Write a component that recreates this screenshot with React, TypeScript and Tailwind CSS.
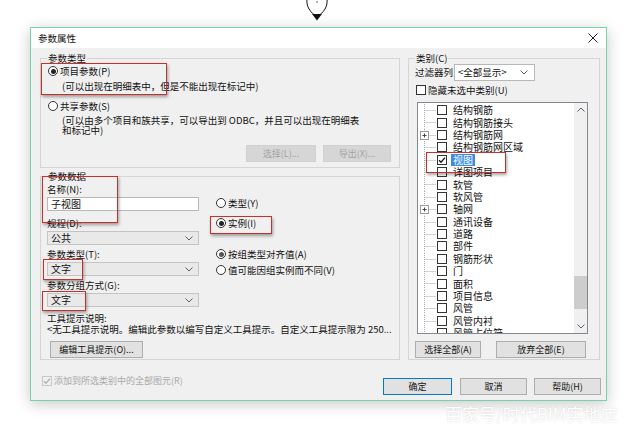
import clsx from "clsx";

const cjk = "font-['Noto_Sans_CJK_SC','Noto_Sans',sans-serif]";

function Radio({ checked, label, dim }: { checked?: boolean; label: string; dim?: boolean }) {
  return (
    <div className="flex items-center gap-[2px] h-[12px] leading-[12px] whitespace-nowrap">
      <span className="w-[10px] h-[10px] rounded-full border border-[#333333] bg-white flex items-center justify-center">
        {checked && <span className={clsx("w-[5px] h-[5px] rounded-full", dim ? "bg-[#555555]" : "bg-[#222222]")} />}
      </span>
      <span>{label}</span>
    </div>
  );
}

function Check({ checked, disabled }: { checked?: boolean; disabled?: boolean }) {
  return (
    <span
      className={clsx(
        "w-[10px] h-[10px] border flex items-center justify-center shrink-0",
        disabled ? "border-[#c8c8c8] bg-[#f0f0f0]" : "border-[#333333] bg-white"
      )}
    >
      {checked && (
        <svg width="8" height="8" viewBox="0 0 8 8">
          <path d="M1 4.2 L3 6.2 L7 1.6" fill="none" stroke={disabled ? "#b0b0b0" : "#111"} strokeWidth="1.3" />
        </svg>
      )}
    </span>
  );
}

function RedBox({ className }: { className: string }) {
  return (
    <div
      className={clsx(
        "absolute border-[1.5px] border-[#c8302c] shadow-[1px_2px_3px_rgba(0,0,0,0.35)] pointer-events-none z-10",
        className
      )}
    />
  );
}

function Chevron({ up }: { up?: boolean }) {
  return (
    <svg width="8" height="5" viewBox="0 0 8 5">
      <path d={up ? "M0.5 4.5 L4 1 L7.5 4.5" : "M0.5 0.5 L4 4 L7.5 0.5"} fill="none" stroke="#606060" strokeWidth="1" />
    </svg>
  );
}

function Select({ value, className }: { value: string; className?: string }) {
  return (
    <div
      className={clsx(
        "h-[14px] flex items-center justify-between pl-[3px] pr-[5px] border border-[#c4c4c4] bg-[#e9e9e9] text-[10px] leading-[12px]",
        className
      )}
    >
      <span>{value}</span>
      <Chevron />
    </div>
  );
}

function Btn({
  children,
  className,
  disabled,
  primary,
}: {
  children: React.ReactNode;
  className?: string;
  disabled?: boolean;
  primary?: boolean;
}) {
  return (
    <div
      className={clsx(
        "h-[17px] flex items-center justify-center border text-[9px] whitespace-nowrap",
        disabled
          ? "bg-[#d6d6d6] border-[#d0d0d0] text-[#a3a3a3]"
          : primary
          ? "bg-[#e1e1e1] border-[#0078d7] border-[1.5px]"
          : "bg-[#e1e1e1] border-[#adadad]",
        className
      )}
    >
      {children}
    </div>
  );
}

const cats: { name: string; plus?: boolean; sel?: boolean }[] = [
  { name: "结构钢筋" },
  { name: "结构钢筋接头" },
  { name: "结构钢筋网", plus: true },
  { name: "结构钢筋网区域" },
  { name: "视图", sel: true },
  { name: "详图项目" },
  { name: "软管" },
  { name: "软风管" },
  { name: "轴网", plus: true },
  { name: "通讯设备" },
  { name: "道路" },
  { name: "部件" },
  { name: "钢筋形状" },
  { name: "门" },
  { name: "面积" },
  { name: "项目信息" },
  { name: "风管" },
  { name: "风管内衬" },
  { name: "风管占位符" },
];

function TreeLines({ plus }: { plus?: boolean }) {
  return (
    <svg width="19" height="12.4" viewBox="0 0 19 12.4" className="shrink-0">
      <line x1="6.5" y1="0" x2="6.5" y2="12.4" stroke="#a8a8a8" strokeDasharray="1 1" />
      <line x1="6.5" y1="6.5" x2="18" y2="6.5" stroke="#a8a8a8" strokeDasharray="1 1" />
      {plus && (
        <g>
          <rect x="2.5" y="2.5" width="8" height="8" fill="white" stroke="#9a9a9a" />
          <line x1="4.5" y1="6.5" x2="8.5" y2="6.5" stroke="#444" />
          <line x1="6.5" y1="4.5" x2="6.5" y2="8.5" stroke="#444" />
        </g>
      )}
    </svg>
  );
}

export default function App() {
  return (
    <div className={clsx("relative w-[640px] h-[432px] bg-white overflow-hidden text-[#111]", cjk)}>
      {/* cursor */}
      <div className="h-[29px] pl-[303px]">
        <svg width="28" height="26" viewBox="0 0 28 26" className="-mt-[2px]">
          <path d="M4 0 C3 9 7 14 14 19 C21 14 25 9 24 0" fill="white" stroke="#111" strokeWidth="1" />
          <circle cx="14" cy="4" r="0.7" fill="#333" />
          <path d="M9 16 L19 16 L14 22.5 Z" fill="#111" />
        </svg>
      </div>

      <div className="ml-[30px] w-[577px] h-[374px] border border-[#78d2a8] bg-[#f0f0f0] shadow-[0_3px_14px_rgba(0,0,0,0.22)] flex flex-col">
        {/* title bar */}
        <div className="h-[20px] bg-white flex items-center justify-between pl-[7px] pr-[8px] shrink-0">
          <span className="text-[9.5px]">参数属性</span>
          <svg width="10" height="10" viewBox="0 0 10 10">
            <path d="M0.5 0.5 L9.5 9.5 M9.5 0.5 L0.5 9.5" stroke="#222" strokeWidth="1" />
          </svg>
        </div>

        {/* body */}
        <div className="flex pt-[4px] pl-[9px] text-[9.5px]">
          {/* left column */}
          <div className="w-[360px] flex flex-col">
            <fieldset className="relative border border-[#d5d5d5] pl-[6px] pr-[2px] pb-[5px] min-w-0">
              <legend className="leading-[12px] px-[1px]">参数类型</legend>
              <div className="relative mt-[1px] pl-[1px]">
                <Radio checked label="项目参数(P)" />
                <div className="mt-[3px] pl-[14px] leading-[12px] whitespace-nowrap">
                  (可以出现在明细表中，但是不能出现在标记中)
                </div>
                <RedBox className="-left-[6px] -top-[2px] w-[126px] h-[32px]" />
              </div>
              <div className="mt-[8px] pl-[1px]">
                <Radio label="共享参数(S)" />
              </div>
              <div className="mt-[3px] pl-[15px] leading-[10px]">
                <div>(可以由多个项目和族共享，可以导出到 ODBC，并且可以出现在明细表</div>
                <div>和标记中)</div>
              </div>
              <div className="mt-[10px] mr-[6px] flex justify-end gap-[7px]">
                <Btn disabled className="w-[70px]">
                  选择(L)...
                </Btn>
                <Btn disabled className="w-[68px]">
                  导出(X)...
                </Btn>
              </div>
            </fieldset>

            <fieldset className="relative mt-[2px] h-[190px] border border-[#d5d5d5] pl-[6px] pr-[2px] min-w-0">
              <legend className="leading-[12px] px-[1px]">参数数据</legend>
              <RedBox className="left-[1px] -top-[6px] w-[76px] h-[47px]" />
              <div className="flex">
                <div className="w-[152px] flex flex-col">
                  <div className="mt-[1px] leading-[12px]">名称(N):</div>
                  <div className="mt-[2px] h-[14px] border border-[#b9b9b9] bg-white pl-[3px] text-[10px] leading-[12px]">
                    子视图
                  </div>
                  <div className="mt-[6px] leading-[12px]">规程(D):</div>
                  <Select value="公共" className="mt-[2px]" />
                  <div className="mt-[3px] leading-[12px]">参数类型(T):</div>
                  <div className="relative mt-[2px]">
                    <Select value="文字" />
                    <RedBox className="-left-[4px] -top-[3px] w-[40px] h-[21px]" />
                  </div>
                  <div className="mt-[3px] leading-[12px]">参数分组方式(G):</div>
                  <div className="relative mt-[2px]">
                    <Select value="文字" />
                    <RedBox className="-left-[5px] -top-[2px] w-[44px] h-[20px]" />
                  </div>
                  <div className="mt-[5px] leading-[12px]">工具提示说明:</div>
                </div>
                <div className="ml-[17px] flex flex-col">
                  <div className="mt-[15px]">
                    <Radio label="类型(Y)" />
                  </div>
                  <div className="relative mt-[8px]">
                    <Radio checked label="实例(I)" />
                    <RedBox className="-left-[6px] -top-[1px] w-[62px] h-[18px]" />
                  </div>
                  <div className="mt-[19px]">
                    <Radio checked dim label="按组类型对齐值(A)" />
                  </div>
                  <div className="mt-[4px]">
                    <Radio label="值可能因组实例而不同(V)" />
                  </div>
                </div>
              </div>
              <div className="leading-[11px] whitespace-nowrap">
                &lt;无工具提示说明。编辑此参数以编写自定义工具提示。自定义工具提示限为 250...
              </div>
              <Btn className="mt-[6px] ml-[3px] w-[93px] h-[16px]">编辑工具提示(O)...</Btn>
            </fieldset>
          </div>

          {/* right column */}
          <fieldset className="ml-[8px] w-[192px] h-[308px] border border-[#d5d5d5] pl-[6px] pr-[2px] min-w-0">
            <legend className="leading-[12px] px-[1px]">类别(C)</legend>
            <div className="h-[17px] flex items-center">
              <span className="w-[39px] whitespace-nowrap">过滤器列</span>
              <div className="h-[17px] w-[81px] border border-[#b8b8b8] bg-white flex items-center justify-between pl-[3px] pr-[6px]">
                <span>&lt;全部显示&gt;</span>
                <Chevron />
              </div>
            </div>
            <div className="mt-[3px] h-[12px] flex items-center gap-[2px] pl-[1px]">
              <Check />
              <span>隐藏未选中类别(U)</span>
            </div>
            <div className="mt-[6px] ml-[2px] w-[171px] h-[232px] border border-[#828790] bg-white flex overflow-hidden">
              <div className="flex-1 pt-[1px] text-[10px] overflow-hidden">
                {cats.map((c) => (
                  <div key={c.name} className="relative h-[12.4px] flex items-center">
                    <TreeLines plus={c.plus} />
                    <Check checked={c.sel} />
                    <span
                      className={clsx(
                        "ml-[4px] px-[2px] leading-[12px] whitespace-nowrap",
                        c.sel && "bg-[#3b8be3] text-white"
                      )}
                    >
                      {c.name}
                    </span>
                    {c.sel && <RedBox className="left-[8px] -top-[2px] w-[80px] h-[21px]" />}
                  </div>
                ))}
              </div>
              <div className="w-[13px] bg-[#f0f0f0] flex flex-col items-center shrink-0">
                <div className="h-[13px] flex items-center justify-center">
                  <Chevron up />
                </div>
                <div className="flex-1 w-full">
                  <div className="mt-[160px] h-[33px] w-full bg-[#cdcdcd]" />
                </div>
                <div className="h-[13px] flex items-center justify-center">
                  <Chevron />
                </div>
              </div>
            </div>
            <div className="mt-[7px] flex">
              <Btn className="w-[66px]">选择全部(A)</Btn>
              <Btn className="ml-[15px] w-[90px]">放弃全部(E)</Btn>
            </div>
          </fieldset>
        </div>

        {/* bottom row */}
        <div className="mt-[15px] flex justify-between pl-[11px] pr-[5px] text-[9px]">
          <div className="h-[12px] flex items-center gap-[2px] text-[#a8a8a8]">
            <Check checked disabled />
            <span>添加到所选类别中的全部图元(R)</span>
          </div>
          <div className="mt-[3px] flex">
            <Btn primary className="w-[69px]">
              确定
            </Btn>
            <Btn className="ml-[8px] w-[67px]">取消</Btn>
            <Btn className="ml-[7px] w-[67px]">帮助(H)</Btn>
          </div>
        </div>
      </div>

      <div className="absolute left-[445px] top-[401px] text-[17px] text-white [text-shadow:0_0_2px_rgba(0,0,0,0.16)] whitespace-nowrap">
        百家号/时代BIM实地应
      </div>
    </div>
  );
}
